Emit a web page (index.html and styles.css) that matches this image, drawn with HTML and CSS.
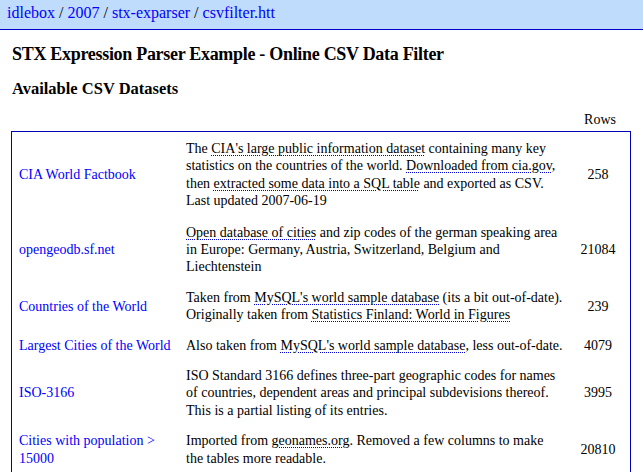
FILE: index.html
```html
<!DOCTYPE html>
<html>
<head>
<meta charset="utf-8">
<link rel="stylesheet" href="styles.css">
</head>
<body>
<div class="topbar">
  <a href="#">idlebox</a> / <a href="#">2007</a> / <a href="#">stx-exparser</a> / <a href="#">csvfilter.htt</a>
</div>
<div class="content">
  <h1>STX Expression Parser Example - Online CSV Data Filter</h1>
  <h2>Available CSV Datasets</h2>
  <div class="rowshead"><span class="rowslabel">Rows</span></div>
  <table class="datasets">
    <colgroup><col class="c-name"><col class="c-desc"><col class="c-rows"></colgroup>
    <tr class="first">
      <td class="name"><a href="#">CIA World Factbook</a></td>
      <td class="desc">The <span class="dl">CIA's large public information dataset</span> containing many key statistics on the countries of the world. <span class="dl">Downloaded from cia.gov</span>, then <span class="dl">extracted some data into a SQL table</span> and exported as CSV. Last updated 2007-06-19</td>
      <td class="rows">258</td>
    </tr>
    <tr>
      <td class="name"><a href="#">opengeodb.sf.net</a></td>
      <td class="desc"><span class="dl">Open database of cities</span> and zip codes of the german speaking area in Europe: Germany, Austria, Switzerland, Belgium and Liechtenstein</td>
      <td class="rows">21084</td>
    </tr>
    <tr>
      <td class="name"><a href="#">Countries of the World</a></td>
      <td class="desc">Taken from <span class="dl">MySQL's world sample database</span> (its a bit out-of-date). Originally taken from <span class="dl">Statistics Finland: World in Figures</span></td>
      <td class="rows">239</td>
    </tr>
    <tr>
      <td class="name"><a href="#">Largest Cities of the World</a></td>
      <td class="desc">Also taken from <span class="dl">MySQL's world sample database</span>, less out-of-date.</td>
      <td class="rows">4079</td>
    </tr>
    <tr>
      <td class="name"><a href="#">ISO-3166</a></td>
      <td class="desc">ISO Standard 3166 defines three-part geographic codes for names<br>of countries, dependent areas and principal subdevisions thereof. This is a partial listing of its entries.</td>
      <td class="rows">3995</td>
    </tr>
    <tr>
      <td class="name"><a href="#">Cities with population &gt; 15000</a></td>
      <td class="desc">Imported from <span class="dl">geonames.org</span>. Removed a few columns to make<br>the tables more readable.</td>
      <td class="rows">20810</td>
    </tr>
  </table>
</div>
</body>
</html>
```
FILE: styles.css
```css
html, body {
  margin: 0;
  padding: 0;
  background: #ffffff;
  color: #000000;
  font-family: "Liberation Serif", "Times New Roman", serif;
  font-size: 14px;
}
a {
  color: #0000ff;
  text-decoration: none;
}
.topbar {
  background: #c0dcfc;
  border-bottom: 1px solid #0000c8;
  height: 30px;
  box-sizing: border-box;
  padding: 2px 0 0 7px;
  font-size: 16px;
  line-height: 22px;
}
.content {
  padding: 0 12px 0 11px;
}
h1 {
  font-size: 18px;
  letter-spacing: -0.3px;
  margin: 13px 0 0 1px;
  line-height: 22px;
}
h2 {
  font-size: 16.5px;
  margin: 14px 0 0 1px;
  line-height: 20px;
}
.rowshead {
  display: flex;
  justify-content: flex-end;
  width: 620px;
  margin-top: 12px;
  height: 17px;
  line-height: 17px;
}
.rowslabel {
  width: 62px;
  text-align: center;
}
.datasets {
  border: 1px solid #0000b4;
  border-collapse: separate;
  border-spacing: 0;
  width: 620px;
  table-layout: fixed;
  margin-top: 3px;
}
.c-name { width: 167px; }
.c-desc { width: 387px; }
.c-rows { width: 64px; }
.datasets td {
  padding: 6px 0 7px 7px;
  line-height: 17.4px;
  vertical-align: middle;
}
.datasets tr.first td {
  padding-top: 8px;
  padding-bottom: 8px;
}
.datasets td.rows {
  text-align: center;
  padding-left: 0;
  padding-right: 0;
}
.dl {
  text-decoration: underline dotted #0000c8;
  text-decoration-thickness: 1px;
  text-underline-offset: 2px;
}
```
